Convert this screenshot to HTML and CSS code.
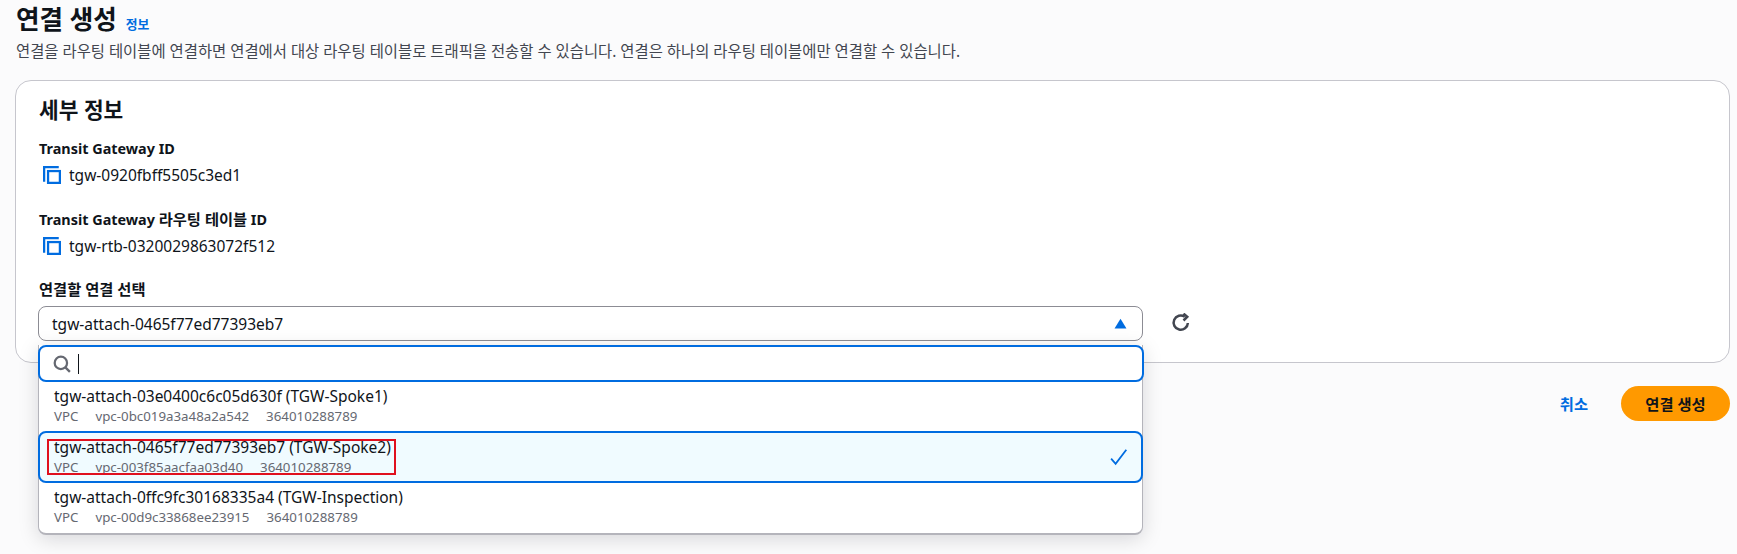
FILE: index.html
```html
<!DOCTYPE html>
<html lang="ko">
<head>
<meta charset="utf-8">
<title>연결 생성</title>
<link rel="stylesheet" href="styles.css">
</head>
<body>
<main class="page">
  <header class="head">
    <div class="title-row"><h1 class="title">연결 생성</h1><a class="info">정보</a></div>
    <p class="desc">연결을 라우팅 테이블에 연결하면 연결에서 대상 라우팅 테이블로 트래픽을 전송할 수 있습니다. 연결은 하나의 라우팅 테이블에만 연결할 수 있습니다.</p>
  </header>
  <section class="card">
    <h2 class="card-title">세부 정보</h2>
    <div class="field">
      <div class="label">Transit Gateway ID</div>
      <div class="value"><svg class="copy" viewBox="0 0 16 16" width="18" height="18"><path d="M1 14V1h13" fill="none"/><rect x="4.5" y="4.5" width="10.5" height="10.5" fill="none"/></svg><span>tgw-0920fbff5505c3ed1</span></div>
    </div>
    <div class="field">
      <div class="label">Transit Gateway <span class="ko">라우팅 테이블</span> ID</div>
      <div class="value"><svg class="copy" viewBox="0 0 16 16" width="18" height="18"><path d="M1 14V1h13" fill="none"/><rect x="4.5" y="4.5" width="10.5" height="10.5" fill="none"/></svg><span>tgw-rtb-0320029863072f512</span></div>
    </div>
    <div class="label select-label"><span class="ko">연결할 연결 선택</span></div>
    <div class="select-row">
      <div class="select-wrap">
        <div class="select"><span>tgw-attach-0465f77ed77393eb7</span><svg class="caret" viewBox="0 0 12 10" width="13" height="11"><path d="M6 0.5 11.5 9.5H0.5Z"/></svg></div>
        <div class="dropdown">
          <div class="search"><svg class="search-icon" viewBox="0 0 16 16" width="18" height="18"><circle cx="7" cy="7" r="5.5" fill="none"/><path d="M11 11l4 4" fill="none"/></svg><span class="cursor"></span></div>
          <div class="option">
            <div class="opt-name">tgw-attach-03e0400c6c05d630f (TGW-Spoke1)</div>
            <div class="opt-meta"><span>VPC</span><span>vpc-0bc019a3a48a2a542</span><span>364010288789</span></div>
          </div>
          <div class="option selected">
            <div class="opt-name">tgw-attach-0465f77ed77393eb7 (TGW-Spoke2)</div>
            <div class="opt-meta"><span>VPC</span><span>vpc-003f85aacfaa03d40</span><span>364010288789</span></div>
            <svg class="check" viewBox="0 0 16 16" width="18" height="18"><path d="M1 9.5 5 14 14.5 1.5" fill="none"/></svg>
            <div class="redbox"></div>
          </div>
          <div class="option">
            <div class="opt-name">tgw-attach-0ffc9fc30168335a4 (TGW-Inspection)</div>
            <div class="opt-meta"><span>VPC</span><span>vpc-00d9c33868ee23915</span><span>364010288789</span></div>
          </div>
        </div>
      </div>
      <svg class="refresh" viewBox="0 0 16 16" width="20" height="20"><path d="M13.5 8a5.7 5.7 0 1 1-2.5-5" fill="none"/><path d="M10 0.5 13 3 10 6" fill="none" stroke-linejoin="miter"/></svg>
    </div>
  </section>
  <footer class="actions">
    <a class="cancel">취소</a>
    <button class="primary">연결 생성</button>
  </footer>
</main>
</body>
</html>
```
FILE: styles.css
```css
* { box-sizing: border-box; }
html, body { margin: 0; height: 554px; overflow: hidden; }
body { background: #fbfbfc; color: #0f141a; font: 15.5px/20px "Noto Sans", "Noto Sans CJK KR", sans-serif; }
.page { padding: 0 7px 0 15px; }
.head { height: 80px; padding-top: 3px; }
.title-row { display: flex; align-items: center; gap: 9px; height: 34px; padding-left: 1px; }
.title { margin: 0; font-size: 25.6px; line-height: 34px; font-weight: 700; }
.info { color: #006ce0; font-size: 12.8px; font-weight: 700; line-height: 16px; margin-top: 7px; }
.desc { margin: 5px 0 0 1px; color: #424650; font-size: 15.4px; line-height: 20px; }
.card { background: #fff; border: 1px solid #c6c6cd; border-radius: 16px; height: 283px; padding: 16px 23px 0; }
.card-title { margin: 0; font-size: 21.4px; line-height: 26px; font-weight: 700; }
.field { margin-top: 16px; height: 59px; }
.field + .field { margin-top: 11px; }
.label { font-size: 14.4px; line-height: 20px; font-weight: 700; }
.ko { font-size: 15.3px; }
.value { display: flex; align-items: center; gap: 8px; margin-top: 4px; padding-left: 4px; height: 24px; color: #0f141a; }
.copy { flex: none; stroke: #006ce0; stroke-width: 2; }
.select-label { margin-top: 11px; }
.select-row { display: flex; align-items: flex-start; gap: 28px; margin: 6px 0 0 -1px; }
.select-wrap { position: relative; width: 1105px; }
.select { display: flex; align-items: center; justify-content: space-between; height: 35px; padding: 0 15px 0 13px; background: #fff; border: 1px solid #8c8c94; border-radius: 8px; }
.caret { fill: #006ce0; }
.dropdown { position: absolute; left: 0; right: 0; top: 39px; padding-bottom: 1px; background: #fff; border: 1px solid #b4b4bb; border-top: 0; border-bottom-width: 2px; border-radius: 0 0 8px 8px; box-shadow: 0 4px 20px rgba(0, 7, 22, .15); }
.search { display: flex; align-items: center; gap: 7px; height: 37px; margin: 0 -2px 0 -1px; padding-left: 13px; background: #fff; border: 2px solid #006ce0; border-radius: 8px; }
.search-icon { stroke: #656871; stroke-width: 2; }
.cursor { width: 1px; height: 20px; background: #0f141a; }
.option { position: relative; height: 49px; padding: 4px 15px 0; }
.option.selected { height: 52px; margin: 0 -1px; padding: 4px 14px 0 14px; background: #f0fbff; border: 2px solid #006ce0; border-radius: 8px; }
.opt-name { font-size: 15.5px; line-height: 20px; color: #0f141a; white-space: nowrap; }
.opt-meta { display: flex; gap: 17px; margin-top: 2px; font-size: 13.3px; line-height: 16px; color: #656871; }
.check { position: absolute; right: 13px; top: 15px; stroke: #006ce0; stroke-width: 1.6; }
.redbox { position: absolute; left: 7px; top: 6px; width: 349px; height: 36px; border: 2px solid #e0101e; }
.refresh { flex: none; margin-top: 7px; stroke: #424650; stroke-width: 2; }
.actions { display: flex; justify-content: flex-end; align-items: center; gap: 33px; margin-top: 23px; }
.cancel { color: #006ce0; font-weight: 700; font-size: 15.3px; }
.primary { height: 35px; width: 109px; border: 0; border-radius: 18px; background: #ff9900; color: #0f141a; font: 700 15.3px/20px "Noto Sans", "Noto Sans CJK KR", sans-serif; }
```
